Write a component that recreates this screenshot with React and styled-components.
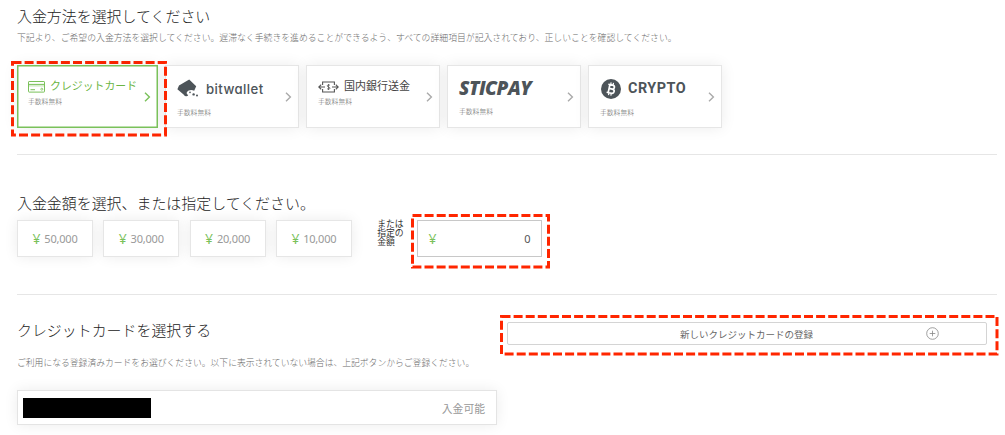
import React from "react";
import styled, { createGlobalStyle } from "styled-components";

const methods = [
  { id: "card", name: "クレジットカード", icon: "card", selected: true },
  { id: "bitwallet", name: "bitwallet", icon: "bitwallet" },
  { id: "bank", name: "国内銀行送金", icon: "bank" },
  { id: "sticpay", name: "STICPAY" },
  { id: "crypto", name: "CRYPTO", icon: "crypto" },
];

const amounts = ["50,000", "30,000", "20,000", "10,000"];

const CardIcon = () => (
  <svg width="17" height="12" viewBox="0 0 17 12" fill="none" stroke="#7ac15a" strokeWidth="1">
    <rect x="0.5" y="0.5" width="16" height="10.6" rx="0.6" />
    <path d="M0.5 3.4h16" />
    <path d="M0.5 4.9h16" strokeWidth="0.5" />
    <path d="M2.5 8.7h4.5" />
    <circle cx="13.8" cy="8.2" r="1" strokeWidth="0.8" />
  </svg>
);

const BitwalletIcon = () => (
  <svg width="22" height="19" viewBox="0 0 22 19">
    <path
      d="M12.2 0.4 19.2 7.3 17.2 11.8C14.8 10.4 11.2 10.8 9.9 13.2 9.2 14.4 9.2 15.7 8.3 17L0.4 10.2 2 6.4Z"
      fill="#4d5459"
    />
    <path d="M7.4 16.2C8 17.4 10 17.6 11.2 16.6L9.4 14Z" fill="#4d5459" />
    <circle cx="13" cy="13.4" r="0.8" fill="#4d5459" />
    <circle cx="16.6" cy="15.4" r="1.2" fill="#4d5459" />
    <circle cx="20" cy="16.4" r="1" fill="#4d5459" />
  </svg>
);

const BankIcon = () => (
  <svg width="21" height="12" viewBox="0 0 21 12" fill="none" stroke="#555" strokeWidth="1.1">
    <path d="M4.6 4V1h11.8v3M4.6 8v3h11.8V8" />
    <path d="M7 6H0.8M3.2 3.6 0.8 6l2.4 2.4M14 6h6.2M17.8 3.6 20.2 6l-2.4 2.4" />
    <path d="M12 4.4C11.3 3.6 9.2 3.7 9.2 4.9S12 5.9 12 7.2 9.6 8.4 9 7.5M10.5 3v6" strokeWidth="0.8" />
  </svg>
);

const CryptoIcon = () => (
  <svg width="21" height="20" viewBox="-1 0 21 20">
    <circle cx="10" cy="10" r="10" fill="#4d5459" />
    <g transform="rotate(12 10 10)" fill="none" stroke="#fff">
      <path
        d="M6.4 5.9h4.4c2.9 0 2.9 3.9 0 3.9H8.2M8.2 9.8h3c3.2 0 3.2 4.3 0 4.3H6.4M8 5.9v8.2"
        strokeWidth="1.7"
      />
      <path d="M8.8 3.6v2.6M11.2 3.6v2.6M8.8 13.8v2.6M11.2 13.8v2.6" strokeWidth="1.2" />
    </g>
  </svg>
);

const icons = {
  card: CardIcon,
  bitwallet: BitwalletIcon,
  bank: BankIcon,
  crypto: CryptoIcon,
};

const Chevron = () => (
  <svg width="7" height="10" viewBox="0 0 7 10" fill="none" stroke="currentColor" strokeWidth="1.4">
    <path d="M1 0.7 5.4 5 1 9.3" />
  </svg>
);

const PlusIcon = () => (
  <svg width="13" height="13" viewBox="0 0 13 13" fill="none" stroke="#888" strokeWidth="0.8">
    <circle cx="6.5" cy="6.5" r="5.8" />
    <path d="M6.5 3.7v5.6M3.7 6.5h5.6" />
  </svg>
);

const Highlight = ({ x, y, w, h }) => (
  <Marker $x={x} $y={y} width={w + 3} height={h + 3}>
    <rect
      x="1.5"
      y="1.5"
      width={w}
      height={h}
      fill="none"
      stroke="#ff2600"
      strokeWidth="3"
      strokeDasharray="9 3.1"
    />
  </Marker>
);

const App = () => {
  return (
    <Page>
      <GlobalStyle />
      <MethodSection>
        <Title>入金方法を選択してください</Title>
        <Lead>
          下記より、ご希望の入金方法を選択してください。遅滞なく手続きを進めることができるよう、すべての詳細項目が記入されており、正しいことを確認してください。
        </Lead>
        <Methods>
          {methods.map(({ id, name, icon, selected }) => {
            const Icon = icons[icon];
            return (
              <Method key={id} $selected={selected}>
                <Brand $id={id}>
                  {Icon && <Icon />}
                  <BrandName $id={id}>{name}</BrandName>
                </Brand>
                <Fee>手数料無料</Fee>
                <Arrow $selected={selected}>
                  <Chevron />
                </Arrow>
              </Method>
            );
          })}
        </Methods>
        <Highlight x={11} y={61} w={153} h={72.5} />
      </MethodSection>

      <AmountSection>
        <Title>入金金額を選択、または指定してください。</Title>
        <Amounts>
          {amounts.map((amount) => (
            <Amount key={amount}>
              <Yen>¥</Yen>
              {amount}
            </Amount>
          ))}
          <OrLabel>
            または
            <br />
            指定の
            <br />
            金額
          </OrLabel>
          <AmountField>
            <Yen>¥</Yen>
            <span>0</span>
          </AmountField>
        </Amounts>
        <Highlight x={411} y={214} w={136} h={51.5} />
      </AmountSection>

      <CardSection>
        <CardHeader>
          <Title>クレジットカードを選択する</Title>
          <RegisterButton>
            新しいクレジットカードの登録
            <PlusIcon />
          </RegisterButton>
        </CardHeader>
        <CardLead>
          ご利用になる登録済みカードをお選びください。以下に表示されていない場合は、上記ボタンからご登録ください。
        </CardLead>
        <CardRow>
          <Redacted />
          <span>入金可能</span>
        </CardRow>
        <Highlight x={500} y={315} w={495.5} h={37.5} />
      </CardSection>
    </Page>
  );
};

const GlobalStyle = createGlobalStyle`
  * {
    box-sizing: border-box;
  }
  body {
    margin: 0;
    background: #fff;
    overflow: hidden;
  }
  svg {
    display: block;
    flex: none;
  }
`;

const Page = styled.div`
  position: relative;
  width: 1005px;
  height: 435px;
  overflow: hidden;
  padding: 0 8px 0 17px;
  font-family: "Noto Sans", "Noto Sans CJK JP", sans-serif;
  color: #222;
`;

const MethodSection = styled.section`
  height: 155px;
  padding-top: 6px;
  border-bottom: 1px solid #e6e6e6;
`;

const AmountSection = styled.section`
  height: 140px;
  padding-top: 38px;
  border-bottom: 1px solid #e6e6e6;
`;

const CardSection = styled.section`
  padding-top: 27px;
`;

const Title = styled.h2`
  margin: 0;
  height: 20px;
  font-size: 14.95px;
  line-height: 20px;
  font-weight: 300;
  white-space: nowrap;
`;

const Lead = styled.p`
  margin: 5px 0 0;
  height: 14px;
  font-size: 8.86px;
  line-height: 14px;
  font-weight: 300;
  color: #6a6a6a;
  white-space: nowrap;
`;

const CardLead = styled(Lead)`
  margin-top: 9px;
  font-size: 8.81px;
`;

const Methods = styled.div`
  display: flex;
  gap: 7px;
  margin-top: 20px;
`;

const Method = styled.div`
  display: grid;
  grid-template-columns: 1fr 8px;
  grid-template-rows: auto 1fr;
  width: ${({ $selected }) => ($selected ? 141 : 134)}px;
  height: 63px;
  padding: ${({ $selected }) => ($selected ? "11px 5px 0 10px" : "11px 5px 0 11px")};
  border: 1px solid ${({ $selected }) => ($selected ? "#7ac15a" : "#e6e6e6")};
  box-shadow: ${({ $selected }) =>
    $selected
      ? "inset 0 0 0 0.5px #7ac15a, 0 0 14px rgba(0, 0, 0, 0.08)"
      : "0 0 14px rgba(0, 0, 0, 0.08)"};
  background: #fff;
  ${({ $selected }) => $selected && "z-index: 1;"}
`;

const brandHeight = { card: 19, bitwallet: 23, bank: 19, sticpay: 22, crypto: 23 };
const brandGap = { card: 5, bitwallet: 7, bank: 5, crypto: 7 };

const Brand = styled.div`
  display: flex;
  align-items: center;
  gap: ${({ $id }) => brandGap[$id] || 0}px;
  height: ${({ $id }) => brandHeight[$id]}px;
  margin-bottom: ${({ $id }) => (brandHeight[$id] > 19 ? 7 : 0)}px;
`;

const BrandName = styled.span`
  font-size: 11px;
  line-height: 18px;
  font-weight: 400;
  white-space: nowrap;
  ${({ $id }) => $id === "card" && "color: #6cb544; font-size: 10.9px; margin-bottom: 1px;"}
  ${({ $id }) => $id === "bank" && "color: #444; margin-bottom: 1px;"}
  ${({ $id }) =>
    $id === "bitwallet" &&
    `font: 500 13.2px/18px Inter, sans-serif;
    font-feature-settings: "cv11";
    letter-spacing: 0.4px;
    color: #4d5459;`}
  ${({ $id }) =>
    $id === "sticpay" &&
    `font: italic 800 19px/20px "Open Sans", sans-serif;
    letter-spacing: -0.5px;
    color: #4d5459;`}
  ${({ $id }) =>
    $id === "crypto" &&
    "font: 700 14.4px/18px Roboto, sans-serif; letter-spacing: 0.5px; color: #4d5459;"}
`;

const Fee = styled.div`
  grid-column: 1;
  height: 12px;
  font-size: 6.8px;
  line-height: 12px;
  font-weight: 300;
  color: #666;
`;

const Arrow = styled.div`
  grid-column: 2;
  grid-row: 1 / 3;
  padding-top: 15px;
  color: ${({ $selected }) => ($selected ? "#7ac15a" : "#aaa")};
`;

const Amounts = styled.div`
  display: flex;
  gap: 10.3px;
  margin-top: 7px;
`;

const Amount = styled.div`
  display: flex;
  align-items: center;
  justify-content: center;
  width: 76px;
  height: 37px;
  border: 1px solid #e6e6e6;
  box-shadow: 0 0 14px rgba(0, 0, 0, 0.08);
  background: #fff;
  color: #999;
  font-size: 11px;
  letter-spacing: -0.2px;
`;

const Yen = styled.span`
  margin-right: 4px;
  color: #7ac15a;
  font-size: 14px;
  line-height: 18px;
`;

const OrLabel = styled.div`
  width: 30px;
  margin-left: 15px;
  font-size: 8.8px;
  line-height: 9.2px;
  color: #333;
  white-space: nowrap;
`;

const AmountField = styled.div`
  display: flex;
  align-items: center;
  justify-content: space-between;
  width: 125px;
  height: 37px;
  padding: 0 11px 0 10px;
  border: 1px solid #c8c8c8;
  color: #555;
  font-size: 11px;
`;

const CardHeader = styled.div`
  display: flex;
  justify-content: space-between;
  align-items: flex-start;
  height: 25px;
  padding-right: 10px;

  ${Title} {
    margin-top: -2px;
  }
`;

const RegisterButton = styled.div`
  display: flex;
  align-items: center;
  justify-content: space-between;
  width: 480px;
  height: 23px;
  padding: 0 47px 0 172px;
  border: 1px solid #d4d4d4;
  border-radius: 2px;
  color: #666;
  font-size: 9.5px;
  white-space: nowrap;
`;

const CardRow = styled.div`
  display: flex;
  align-items: center;
  justify-content: space-between;
  width: 480px;
  height: 35px;
  margin-top: 20px;
  padding: 0 11px 0 5px;
  border: 1px solid #e4e4e4;
  box-shadow: 0 0 14px rgba(0, 0, 0, 0.08);
  background: #fff;
  color: #999;
  font-size: 10.8px;
`;

const Redacted = styled.div`
  width: 128px;
  height: 20px;
  background: #000;
`;

const Marker = styled.svg`
  position: absolute;
  left: ${({ $x }) => $x}px;
  top: ${({ $y }) => $y}px;
`;

export default App;
